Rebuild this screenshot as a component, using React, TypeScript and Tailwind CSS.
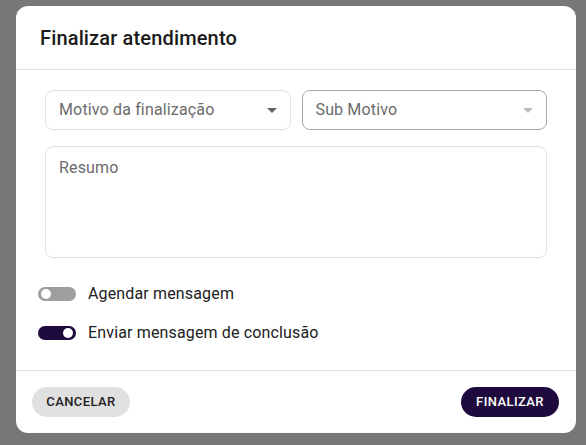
const font = { fontFamily: 'Roboto, "Noto Sans", Arial, sans-serif' };

function Caret({ light }: { light?: boolean }) {
  return (
    <svg width="10" height="5" viewBox="0 0 10 5" className={light ? "text-[#bdbdbd]" : "text-[#666666]"}>
      <path d="M0 0 L5 5 L10 0 Z" fill="currentColor" />
    </svg>
  );
}

function SelectField({ label, light }: { label: string; light?: boolean }) {
  return (
    <div
      className={`flex h-[40px] flex-1 items-center justify-between rounded-lg border pl-[13px] pr-[13px] ${
        light ? "border-[#a8a8a8]" : "border-[#e0e0e0]"
      }`}
    >
      <span className="text-base tracking-[0.15px] text-[#6b6b6b]">{label}</span>
      <Caret light={light} />
    </div>
  );
}

function Toggle({ on, label }: { on?: boolean; label: string }) {
  return (
    <div className="flex h-6 items-center">
      <div
        className={`ml-[-2px] flex h-[14px] w-[38px] items-center rounded-full px-[3px] ${
          on ? "justify-end bg-[#1e0a3c]" : "justify-start bg-[#9e9e9e]"
        }`}
      >
        <div className="h-[10px] w-[10px] rounded-full bg-white" />
      </div>
      <span className="ml-3 text-base tracking-[0.15px] text-[#212121]">{label}</span>
    </div>
  );
}

export default function App() {
  return (
    <div className="h-[445px] w-[586px] overflow-hidden bg-[#777777] pl-4 pt-[6px]" style={font}>
      <div className="flex h-[427px] w-[560px] flex-col rounded-xl bg-white">
        <div className="flex h-16 items-center border-b border-[#e0e0e0] px-6">
          <h2 className="text-xl font-medium tracking-[0.15px] text-[#1a1a1a]">Finalizar atendimento</h2>
        </div>
        <div className="flex flex-1 flex-col px-6 pt-5">
          <div className="mx-[5px] flex gap-[11px]">
            <SelectField label="Motivo da finalização" />
            <SelectField label="Sub Motivo" light />
          </div>
          <div className="mx-[5px] mt-4 h-[112px] rounded-lg border border-[#e0e0e0] px-[13px] pt-[9px]">
            <span className="text-base tracking-[0.15px] text-[#6b6b6b]">Resumo</span>
          </div>
          <div className="mt-6 flex flex-col gap-[15px]">
            <Toggle label="Agendar mensagem" />
            <Toggle on label="Enviar mensagem de conclusão" />
          </div>
        </div>
        <div className="flex h-[63px] items-center justify-between border-t border-[#e0e0e0] pl-4 pr-[17px]">
          <button className="h-[30px] w-[98px] rounded-full bg-[#e0e0e0] text-[13px] font-medium uppercase tracking-[0.4px] text-[#212121]">
            Cancelar
          </button>
          <button className="h-[30px] w-[98px] rounded-full bg-[#1e0a3c] text-[13px] font-medium uppercase tracking-[0.4px] text-white">
            Finalizar
          </button>
        </div>
      </div>
    </div>
  );
}
